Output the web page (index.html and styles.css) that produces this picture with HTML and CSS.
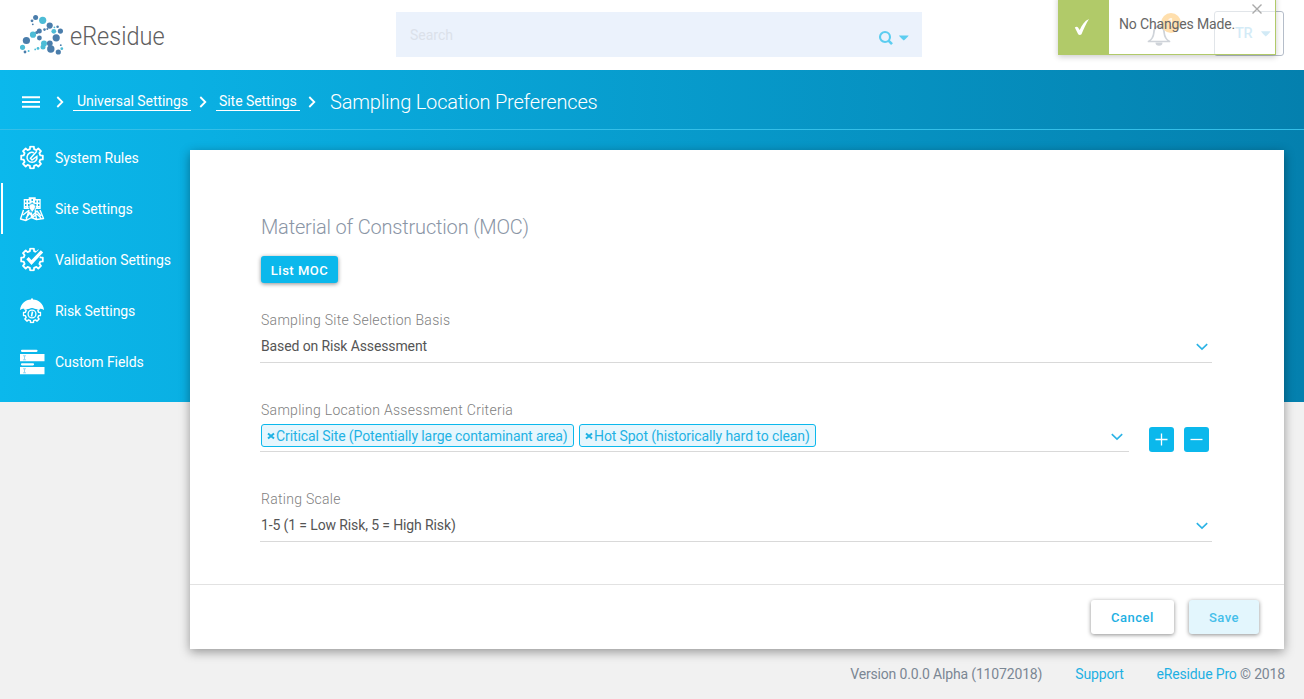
FILE: index.html
```
<!DOCTYPE html>
<html lang="en">
<head>
<meta charset="utf-8">
<title>Sampling Location Preferences</title>
<link rel="stylesheet" href="styles.css">
</head>
<body>
<svg class="defs" width="0" height="0">
  <symbol id="gear" viewBox="0 0 24 24"><path d="M20.3 9.9 22.8 10.1V13.9L20.3 14.1 19.4 16.4 21 18.3 18.3 21 16.4 19.4 14.1 20.3 13.9 22.8H10.1L9.9 20.3 7.6 19.4 5.7 21 3 18.3 4.6 16.4 3.7 14.1 1.2 13.9V10.1L3.7 9.9 4.6 7.6 3 5.7 5.7 3 7.6 4.6 9.9 3.7 10.1 1.2H13.9L14.1 3.7 16.4 4.6 18.3 3 21 5.7 19.4 7.6Z" fill="none" stroke="#fff" stroke-width="1.8" stroke-linejoin="round"/></symbol>
  <symbol id="chev" viewBox="0 0 12 8"><path d="M.8 1.2 6 6.2 11.2 1.2" fill="none" stroke="#2bb3e6" stroke-width="1.6"/></symbol>
  <symbol id="crumb" viewBox="0 0 8 12"><path d="M1.3 1 6.3 6 1.3 11" fill="none" stroke="#fff" stroke-width="1.8"/></symbol>
</svg>

<header class="header">
  <a class="logo">
    <svg width="44" height="42" viewBox="20 14 44 42">
      <g fill="#4a7dab"><circle cx="35.6" cy="17.6" r="2.5"/><circle cx="32" cy="20.8" r="1.4"/><circle cx="32.8" cy="24.3" r=".9"/><circle cx="49.7" cy="25.6" r="3.1"/><circle cx="57.6" cy="26.8" r="1.3"/><circle cx="60.4" cy="31.1" r="2.6"/><circle cx="56.2" cy="37.8" r="3.6"/><circle cx="39.3" cy="31" r="2.5"/><circle cx="36.7" cy="32.5" r="1.6"/><circle cx="44.5" cy="29.6" r="1.3"/><circle cx="47.3" cy="28.9" r="1"/><circle cx="39.4" cy="38" r="2.4"/><circle cx="26.4" cy="40.5" r="3.6"/><circle cx="25" cy="52" r="1.4"/><circle cx="49.8" cy="43.3" r="2.9"/><circle cx="50.8" cy="49" r="3.7"/><circle cx="58.3" cy="52" r="2.6"/><circle cx="60.8" cy="45.2" r=".9"/></g>
      <g fill="#4dbcd6"><circle cx="42.7" cy="20.3" r="3.6"/><circle cx="53.8" cy="31.3" r="2.4"/><circle cx="54.4" cy="27.3" r=".9"/><circle cx="33" cy="34.7" r="3.1"/><circle cx="22.5" cy="47.3" r="2.6"/><circle cx="28.6" cy="51" r="1"/><circle cx="44" cy="43.5" r="3"/><circle cx="43" cy="47" r="2.5"/><circle cx="38" cy="48.4" r="1.4"/><circle cx="35.2" cy="49.4" r=".9"/><circle cx="61.8" cy="48.7" r="1.4"/></g>
    </svg>
    <span class="logo-text">eResidue</span>
  </a>
  <div class="search">
    <span class="placeholder">Search</span>
    <svg class="search-icon" width="32" height="16" viewBox="0 0 32 16"><circle cx="7" cy="7" r="5" fill="none" stroke="#5ccdf0" stroke-width="2.1"/><path d="M10.5 10.7 14 14.2" stroke="#5ccdf0" stroke-width="2.6"/><path d="M21 5.5h9.600q-.3 1.200-4.800 5-4.500-3.800-4.800-5Z" fill="#5ccdf0"/></svg>
  </div>
  <div class="account">
    <div class="bell">
      <svg width="24" height="24" viewBox="0 0 24 24"><path d="M1.500 18.500c3.500-2 4.900-4.300 5.300-8.500.3-4.500 2.200-6.800 5.200-6.800s4.900 2.300 5.200 6.800c.4 4.200 1.800 6.500 5.300 8.500Z" fill="none" stroke="#8792a0" stroke-width="1.700" stroke-linejoin="round"/><path d="M8.500 19.500h7a3.500 3.300 0 0 1-7 0Z" fill="#8792a0"/></svg>
      <span class="badge">1</span>
    </div>
    <div class="user"><span>TR</span><svg width="10" height="6" viewBox="0 0 10 6"><path d="M0 .3h9.600Q9 1.500 4.800 5.500.6 1.500 0 .3Z" fill="#8fcbe8"/></svg></div>
  </div>
  <div class="toast">
    <div class="toast-icon"><svg width="18" height="18" viewBox="0 0 18 18"><path d="M1.800 9.600C3 8.600 4.300 8.500 5 9.400L6.700 12C8.800 7 11.500 3 16 1 13 5.500 11 10.500 8.500 16.300 7.500 17.200 6 17.200 5.200 16.300Z" fill="#fff"/></svg></div>
    <div class="toast-text">No Changes Made.</div>
    <svg class="toast-close" width="10" height="10" viewBox="0 0 10 10"><path d="M.5.5 9.500 9.500M9.500.5.5 9.500" stroke="#aaa" stroke-width="1.400"/></svg>
  </div>
</header>

<div class="page">
  <nav class="crumbs">
    <svg class="burger" width="18" height="12" viewBox="0 0 18 12"><path d="M0 1.200h18M0 6h18M0 10.800h18" stroke="#fff" stroke-width="2"/></svg>
    <svg class="sep s1" width="8" height="12"><use href="#crumb"/></svg>
    <a class="link l1">Universal Settings</a>
    <svg class="sep s2" width="8" height="12"><use href="#crumb"/></svg>
    <a class="link l2">Site Settings</a>
    <svg class="sep s3" width="8" height="12"><use href="#crumb"/></svg>
    <h1>Sampling Location Preferences</h1>
  </nav>
  <div class="body">
    <aside class="side">
      <a class="item"><svg width="26" height="26" viewBox="-1 -.5 26 26"><use href="#gear" width="24" height="24"/><path d="M13.800 7.200A5 5 0 1 0 16.900 10.800L12 14.500 10.500 12.800 16.800 5.800" fill="none" stroke="#fff" stroke-width="1.500"/></svg>System Rules</a>
      <a class="item active"><svg width="26" height="26" viewBox="0 0 26 26"><path d="M4.700 3h5V1.300h7V3h5v10h-17Z" fill="#fff"/><path d="M6.700 4.500v7M9.700 4.500v7M13.200 3v5M16.700 4.500v7M19.700 4.500v7" stroke="#0db3e5" stroke-width="1.400" stroke-dasharray="2 1.400"/><path d="M4.500 14 1.500 23l5.500 1.500 5.500-3 5 2 7-1-3.500-8.500M7 24.500 10 14M12.500 21.500V14M17.500 23.500 16 13M4 19l5-4 4 5 5-5 4 5M7 22l4-5 3 4 4-3 4 4" fill="none" stroke="#fff" stroke-width="1.400" stroke-linejoin="round"/><path d="M13.200 7.500a3.300 3.300 0 0 1 3.300 3.300c0 2-2 3.200-3.300 6-1.300-2.800-3.300-4-3.300-6a3.300 3.300 0 0 1 3.300-3.300Z" fill="#fff" stroke="#0db3e5" stroke-width=".8"/></svg>Site Settings</a>
      <a class="item"><svg width="26" height="26" viewBox="-1 -.5 26 26"><use href="#gear" width="24" height="24"/><path d="M17 8 23 2.500" stroke="#0db3e5" stroke-width="6"/><path d="M7.500 10.700 11.500 15 22 3.800" fill="none" stroke="#fff" stroke-width="3.300"/></svg>Validation Settings</a>
      <a class="item"><svg width="26" height="26" viewBox="0 0 26 26"><use href="#gear" x="3.500" y="6.500" width="19" height="19"/><path d="M1 12C1.500 5.500 6.500 1.800 12 1.500V.5h2v1C19.500 1.800 24.500 5.500 25 12 22.500 10.300 20.500 10.300 18.500 11.500 15 9.500 11 9.500 7.500 11.500 5.500 10.300 3.500 10.300 1 12Z" fill="#fff"/><circle cx="13" cy="16" r="3.900" fill="none" stroke="#fff" stroke-width="1.300"/><path d="M13.500 13.500 12.500 18.500" stroke="#fff" stroke-width="1.600"/></svg>Risk Settings</a>
      <a class="item"><svg width="26" height="26" viewBox="0 0 26 26"><path d="M3 1.800h14.500M3 15.300h11" stroke="#fff" stroke-width="2.200" stroke-linecap="round"/><path d="M1 5h24.500v7.300H1ZM1 18h24.500v7.300H1Z" fill="#fff"/><path d="M4 6.800h3M4 10.800h3M5.500 6.800v4M4 19.800h3M4 23.800h3M5.500 19.800v4" stroke="#8ed3ee" stroke-width=".9"/></svg>Custom Fields</a>
    </aside>
    <main class="card">
      <div class="content">
        <h2>Material of Construction (MOC)</h2>
        <button class="btn primary">List MOC</button>
        <section class="field f1">
          <label>Sampling Site Selection Basis</label>
          <div class="select"><span>Based on Risk Assessment</span><svg width="12" height="8"><use href="#chev"/></svg></div>
        </section>
        <section class="field f2">
          <label>Sampling Location Assessment Criteria</label>
          <div class="row">
            <div class="multi">
              <span class="tag t1"><svg width="8" height="8" viewBox="0 0 8 8"><path d="M1 1.500 7 6.500M7 1.500 1 6.500" stroke="#1fb2e4" stroke-width="2"/></svg><span>Critical Site (Potentially large contaminant area)</span></span>
              <span class="tag t2"><svg width="8" height="8" viewBox="0 0 8 8"><path d="M1 1.500 7 6.500M7 1.500 1 6.500" stroke="#1fb2e4" stroke-width="2"/></svg><span>Hot Spot (historically hard to clean)</span></span>
              <svg class="arrow" width="12" height="8"><use href="#chev"/></svg>
            </div>
            <button class="sq"><svg width="13" height="13" viewBox="0 0 13 13"><path d="M.5 6.500h12M6.500.5v12" stroke="#fff" stroke-width="1.300"/></svg></button>
            <button class="sq"><svg width="13" height="13" viewBox="0 0 13 13"><path d="M.5 6.500h12" stroke="#fff" stroke-width="1.300"/></svg></button>
          </div>
        </section>
        <section class="field f3">
          <label>Rating Scale</label>
          <div class="select"><span>1-5 (1 = Low Risk, 5 = High Risk)</span><svg width="12" height="8"><use href="#chev"/></svg></div>
        </section>
      </div>
      <div class="actions">
        <button class="btn cancel">Cancel</button>
        <button class="btn save">Save</button>
      </div>
    </main>
  </div>
  <footer class="footer">
    <span class="version">Version 0.0.0 Alpha (11072018)</span>
    <a class="support">Support</a>
    <span class="copy"><a>eResidue Pro</a> © 2018</span>
  </footer>
</div>
</body>
</html>
```
FILE: styles.css
```
* { box-sizing: border-box; }
body { margin: 0; width: 1304px; height: 699px; overflow: hidden; background: #f1f1f1; font: 14px/20px Roboto, "Liberation Sans", sans-serif; color: #555; }
svg { display: block; flex: none; }
.defs { position: absolute; }
h1, h2 { margin: 0; font-weight: 300; font-size: 20px; line-height: 24px; letter-spacing: -.18px; white-space: nowrap; }
button { border: 0; padding: 0; font-family: inherit; }

.header { position: relative; height: 70px; background: #fff; display: flex; align-items: flex-start; }
.logo { display: flex; width: 396px; padding: 14px 0 0 20px; }
.logo-text { margin: 9px 0 0 6px; font-size: 25px; line-height: 28px; height: 28px; color: #606060; font-weight: 300; transform: scaleX(.94); transform-origin: 0 0; }
.search { display: flex; justify-content: space-between; width: 526px; height: 45px; margin-top: 12px; padding: 0 12px 0 14px; background: #ebf2fc; }
.placeholder { line-height: 47px; color: #dbe1ea; }
.search-icon { margin-top: 18px; }
.account { display: flex; margin-left: 224px; }
.bell { position: relative; width: 68px; padding-top: 23px; padding-left: 1px; }
.badge { position: absolute; left: 15px; top: 13px; width: 20px; height: 20px; border-radius: 50%; background: #ffaf34; color: #fff; font-size: 11px; text-align: center; }
.user { display: flex; align-items: center; gap: 9px; width: 70px; height: 45px; margin-top: 11px; padding-left: 20px; border: 1px solid #b5bdc9; border-radius: 3px; font-weight: 500; font-size: 14.5px; color: #93cdea; }
.user span { letter-spacing: -.3px; }
.toast { position: absolute; left: 1058px; top: -5px; width: 218px; height: 60px; display: flex; background: rgba(255,255,255,.6); border: solid #b1ca69; border-width: 0 1px 1px 0; box-shadow: 0 2px 6px rgba(0,0,0,.2); }
.toast-icon { width: 51px; height: 60px; padding: 23px 0 0 15px; background: #b1ca69; }
.toast-text { padding: 19px 0 0 10px; color: #666; letter-spacing: -.15px; white-space: nowrap; }
.toast-close { position: absolute; right: 13px; top: 9px; }

.page { background: linear-gradient(90deg, #0bb8ec 0, #0480ae 100%) no-repeat 0 0 / 100% 332px; }
.crumbs { display: flex; height: 60px; padding-left: 22px; border-bottom: 1px solid #35bfe8; color: #fff; align-items: flex-start; }
.burger { margin-top: 26px; }
.sep { margin-top: 26px; }
.s1 { margin-left: 16px; }
.s2 { margin-left: 8px; }
.s3 { margin-left: 8px; }
.link { height: 20px; margin-top: 21px; padding: 0 3px; border-bottom: 1px solid #fff; letter-spacing: -.05px; white-space: nowrap; }
.l1 { margin-left: 9px; width: 118px; padding-left: 4px; }
.l2 { margin-left: 9px; width: 84px; }
.crumbs h1 { margin: 20px 0 0 14px; }

.body { display: flex; }
.side { width: 190px; padding-top: 2px; }
.item { display: flex; align-items: center; gap: 10px; height: 51px; padding-left: 19px; color: #fff; letter-spacing: -.05px; white-space: nowrap; }
.active { box-shadow: inset 1px 0 #0ab4e7, inset 3px 0 #fff; }
.card { width: 1094px; height: 499px; margin-top: 20px; background: #fff; box-shadow: 0 3px 10px rgba(0,0,0,.38); }
.content { height: 434px; padding: 65px 72px 0 71px; }
.content h2 { color: #8a95a5; }
.btn { display: block; border-radius: 3px; font-size: 13px; font-weight: 500; letter-spacing: .5px; color: #1eb0e3; box-shadow: 0 1px 4px rgba(0,0,0,.45); }
.primary { width: 77px; height: 27px; margin-top: 17px; padding-top: 2px; background: #0bb8ec; color: #fff; }
.field label { display: block; color: #808080; font-weight: 300; letter-spacing: .29px; }
.f1 { margin-top: 27px; }
.f2 { margin-top: 37px; }
.f3 { margin-top: 37px; }
.select { display: flex; justify-content: space-between; align-items: flex-start; height: 33px; margin-left: -1px; padding: 6px 4px 0 1px; border-bottom: 1px solid #d9d9d9; letter-spacing: -.12px; }
.select svg { margin-top: 7px; }
.row { display: flex; align-items: flex-start; height: 32px; margin-left: -1px; }
.multi { display: flex; width: 869px; height: 32px; padding: 4px 6px 0 1px; gap: 5px; border-bottom: 1px solid #d9d9d9; }
.tag { display: flex; align-items: center; height: 23px; padding-left: 5px; border: 1px solid #0bb8ec; border-radius: 3px; background: #e6f6fd; color: #1fb2e4; letter-spacing: -.1px; white-space: nowrap; gap: 1px; }
.t1 { width: 313px; }
.t2 { width: 237px; }
.arrow { margin: 9px 0 0 auto; }
.sq { display: grid; place-items: center; width: 25px; height: 25px; margin: 7px 0 0 20px; border-radius: 3px; background: #0bb8ec; }
.sq + .sq { margin-left: 10px; }
.actions { display: flex; justify-content: flex-end; gap: 15px; height: 65px; padding: 15px 25px 0 0; border-top: 1px solid #e2e2e2; }
.cancel { width: 83px; height: 34px; background: #fff; }
.save { width: 70px; height: 34px; background: #e3f6fd; color: #45bfea; }
.footer { display: flex; justify-content: flex-end; padding: 15px 19px 0 0; color: #7b8794; letter-spacing: -.16px; white-space: nowrap; }
.footer a { color: #1eb0e3; }
.footer .support { margin: 0 33px; }
```
